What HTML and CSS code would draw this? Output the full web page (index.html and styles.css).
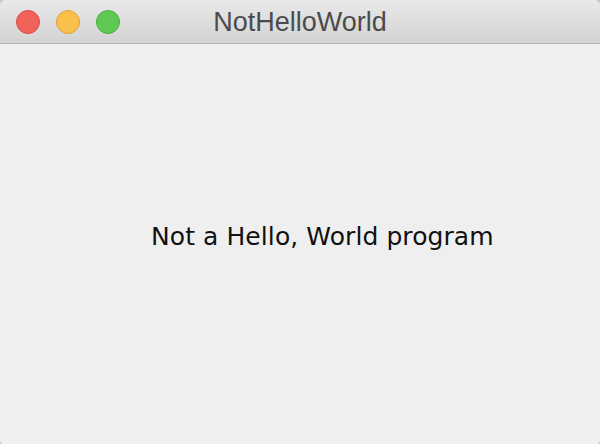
FILE: index.html
```html
<!DOCTYPE html>
<html>
<head>
<meta charset="utf-8">
<link rel="stylesheet" href="styles.css">
</head>
<body>
<div class="window">
  <div class="titlebar">
    <div class="lights">
      <span class="light red"></span>
      <span class="light yellow"></span>
      <span class="light green"></span>
    </div>
    <div class="title">NotHelloWorld</div>
  </div>
  <div class="content">
    <div class="message">Not a Hello, World program</div>
  </div>
</div>
</body>
</html>
```
FILE: styles.css
```css
html, body {
  margin: 0;
  padding: 0;
  width: 600px;
  height: 444px;
  background: #cbc5b4;
  overflow: hidden;
}
.window {
  width: 600px;
  height: 444px;
  border-radius: 6px 6px 4px 4px;
  overflow: hidden;
  background: #efefef;
  display: flex;
  flex-direction: column;
}
.titlebar {
  position: relative;
  height: 43px;
  flex: none;
  background: linear-gradient(#e9e9e9, #d3d3d3);
  border-bottom: 1px solid #b3b3b3;
  display: flex;
  align-items: center;
  justify-content: center;
}
.lights {
  position: absolute;
  left: 16px;
  top: 10px;
  display: flex;
  gap: 16px;
}
.light {
  width: 22px;
  height: 22px;
  border-radius: 50%;
  display: block;
}
.red { background: #f0625a; border: 1px solid #dc4a43; }
.yellow { background: #fbbf4c; border: 1px solid #e0a23a; }
.green { background: #5fc853; border: 1px solid #4aae3f; }
.title {
  font-family: "Liberation Sans", Arial, sans-serif;
  font-size: 27px;
  color: #4b4b4b;
  margin-top: 1px;
}
.content {
  flex: 1;
  position: relative;
}
.message {
  font-family: "DejaVu Sans", sans-serif;
  font-size: 25px;
  letter-spacing: 0.08px;
  color: #111;
  padding-left: 151px;
  padding-top: 178px;
  white-space: nowrap;
}
```
